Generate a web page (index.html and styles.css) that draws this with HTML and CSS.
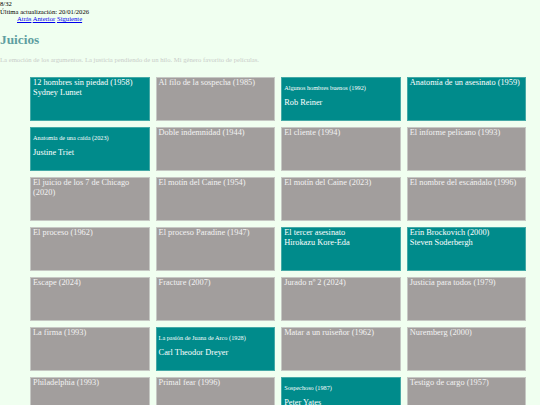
FILE: index.html
```html
<!DOCTYPE html>
<html lang="es">
<head>
<meta charset="utf-8">
<title>Juicios</title>
<link rel="stylesheet" href="styles.css">
</head>
<body>
<header class="top">
  <div>8/32</div>
  <div>Última actualización: 20/01/2026</div>
  <nav class="nav"><a href="#">Atrás</a> <a href="#">Anterior</a> <a href="#">Siguiente</a></nav>
</header>
<h1 class="title">Juicios</h1>
<p class="intro">La emoción de los argumentos. La justicia pendiendo de un hilo. Mi género favorito de películas.</p>
<main class="grid">
  <div class="card seen"><div>12 hombres sin piedad (1958)</div><div>Sydney Lumet</div></div>
  <div class="card"><div>Al filo de la sospecha (1985)</div></div>
  <div class="card seen"><p class="small">Algunos hombres buenos (1992)</p><div>Rob Reiner</div></div>
  <div class="card seen"><div>Anatomía de un asesinato (1959)</div></div>

  <div class="card seen"><p class="small">Anatomía de una caída (2023)</p><div>Justine Triet</div></div>
  <div class="card"><div>Doble indemnidad (1944)</div></div>
  <div class="card"><div>El cliente (1994)</div></div>
  <div class="card"><div>El informe pelicano (1993)</div></div>

  <div class="card"><div>El juicio de los 7 de Chicago (2020)</div></div>
  <div class="card"><div>El motín del Caine (1954)</div></div>
  <div class="card"><div>El motín del Caine (2023)</div></div>
  <div class="card"><div>El nombre del escándalo (1996)</div></div>

  <div class="card"><div>El proceso (1962)</div></div>
  <div class="card"><div>El proceso Paradine (1947)</div></div>
  <div class="card seen"><div>El tercer asesinato</div><div>Hirokazu Kore-Eda</div></div>
  <div class="card seen"><div>Erin Brockovich (2000)</div><div>Steven Soderbergh</div></div>

  <div class="card"><div>Escape (2024)</div></div>
  <div class="card"><div>Fracture (2007)</div></div>
  <div class="card"><div>Jurado nº 2 (2024)</div></div>
  <div class="card"><div>Justicia para todos (1979)</div></div>

  <div class="card"><div>La firma (1993)</div></div>
  <div class="card seen"><p class="small">La pasión de Juana de Arco (1928)</p><div>Carl Theodor Dreyer</div></div>
  <div class="card"><div>Matar a un ruiseñor (1962)</div></div>
  <div class="card"><div>Nuremberg (2000)</div></div>

  <div class="card"><div>Philadelphia (1993)</div></div>
  <div class="card"><div>Primal fear (1996)</div></div>
  <div class="card seen"><p class="small">Sospechoso (1987)</p><div>Peter Yates</div></div>
  <div class="card"><div>Testigo de cargo (1957)</div></div>
</main>
</body>
</html>
```

FILE: styles.css
```css
html, body {
  margin: 0;
  padding: 0;
}

body {
  background: #f0fff0;
  font-family: "Liberation Serif", "Times New Roman", serif;
  font-size: 6.67px;
  line-height: 7.67px;
  color: #000;
}

.nav {
  padding-left: 17px;
}

.nav a {
  color: #0000ee;
  text-decoration: underline;
}

.title {
  margin: 9px 0 9px;
  font-size: 13.33px;
  line-height: 15.3px;
  font-weight: bold;
  color: #5f9ea0;
}

.intro {
  margin: 0;
  color: #c9cdc9;
}

.grid {
  display: grid;
  grid-template-columns: repeat(4, 119.6px);
  grid-auto-rows: 44px;
  column-gap: 6px;
  row-gap: 6px;
  margin: 13px 0 0 30px;
}

.card {
  box-sizing: border-box;
  border: 1px solid #c6c8c4;
  background: #a29e9d;
  color: #f2f2f2;
  padding: 0 2px;
  font-size: 8.33px;
  line-height: 9.6px;
  overflow: hidden;
}

.card.seen {
  background: #008b8b;
  border-color: #45a9a6;
  color: #fff;
}

.small {
  margin: 6.25px 0;
  font-size: 6.25px;
  line-height: 7.2px;
}
```
